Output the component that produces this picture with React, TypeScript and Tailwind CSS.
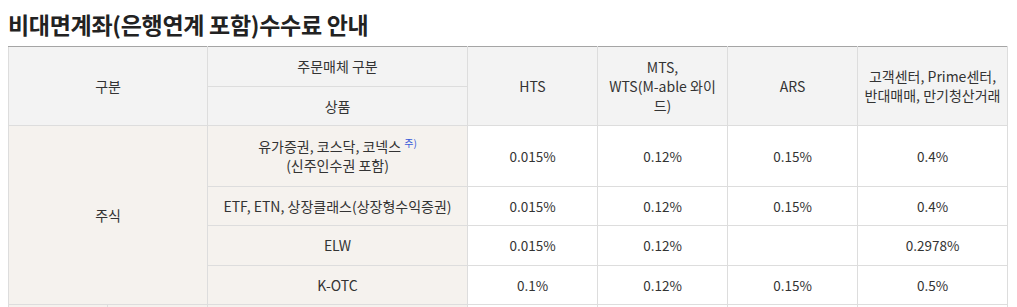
const rows = [
  { name: 'ETF, ETN, 상장클래스(상장형수익증권)', hts: '0.015%', mts: '0.12%', ars: '0.15%', center: '0.4%', h: 'h-[39px]' },
  { name: 'ELW', hts: '0.015%', mts: '0.12%', ars: '', center: '0.2978%', h: 'h-[40px]' },
  { name: 'K-OTC', hts: '0.1%', mts: '0.12%', ars: '0.15%', center: '0.5%', h: 'h-[39px]' },
];

const th = 'border border-[#dddddd] bg-[#f3f3f3] font-normal text-center align-middle';
const tdGray = 'border border-[#dddddd] bg-[#f5f2ee] text-center align-middle';
const td = 'border border-[#dddddd] bg-white text-center align-middle text-[13.5px]';

const FeeGuide = () => {
  return (
    <div className="px-2 pt-[10px] font-['Malgun_Gothic','Noto_Sans_CJK_KR',sans-serif] text-[#333333]">
      <h2 className="text-[23px] font-bold leading-[28px] tracking-[-0.3px] text-[#222222] mb-[8px]">
        비대면계좌(은행연계 포함)수수료 안내
      </h2>
      <table className="w-[999px] table-fixed border-collapse border-t border-t-[#a5a5a5] text-[14px] leading-[19px]">
        <colgroup>
          <col className="w-[99px]" />
          <col className="w-[100px]" />
          <col className="w-[260px]" />
          <col className="w-[130px]" />
          <col className="w-[130px]" />
          <col className="w-[130px]" />
          <col className="w-[150px]" />
        </colgroup>
        <thead>
          <tr className="h-[40px]">
            <th colSpan={2} rowSpan={2} className={`${th} border-t-[#a5a5a5]`}>구분</th>
            <th className={`${th} border-t-[#a5a5a5]`}>주문매체 구분</th>
            <th rowSpan={2} className={`${th} border-t-[#a5a5a5]`}>HTS</th>
            <th rowSpan={2} className={`${th} border-t-[#a5a5a5] px-2`}>
              MTS,
              <br />
              WTS(M-able 와이
              <br />
              드)
            </th>
            <th rowSpan={2} className={`${th} border-t-[#a5a5a5]`}>ARS</th>
            <th rowSpan={2} className={`${th} border-t-[#a5a5a5] px-1`}>
              고객센터, Prime센터,
              <br />
              반대매매, 만기청산거래
            </th>
          </tr>
          <tr className="h-[39px]">
            <th className={th}>상품</th>
          </tr>
        </thead>
        <tbody>
          <tr className="h-[61px]">
            <td colSpan={2} rowSpan={4} className={tdGray}>주식</td>
            <td className={tdGray}>
              유가증권, 코스닥, 코넥스{' '}
              <sup className="text-[10px] text-[#3a5bd9]">주)</sup>
              <br />
              (신주인수권 포함)
            </td>
            <td className={td}>0.015%</td>
            <td className={td}>0.12%</td>
            <td className={td}>0.15%</td>
            <td className={td}>0.4%</td>
          </tr>
          {rows.map((r) => (
            <tr key={r.name} className={r.h}>
              <td className={tdGray}>{r.name}</td>
              <td className={td}>{r.hts}</td>
              <td className={td}>{r.mts}</td>
              <td className={td}>{r.ars}</td>
              <td className={td}>{r.center}</td>
            </tr>
          ))}
          <tr className="h-[40px]">
            <td className={tdGray}></td>
            <td className={tdGray}></td>
            <td className={tdGray}></td>
            <td className={td}></td>
            <td className={td}></td>
            <td className={td}></td>
            <td className={td}></td>
          </tr>
        </tbody>
      </table>
    </div>
  );
};

export default function App() {
  return <FeeGuide />;
}
